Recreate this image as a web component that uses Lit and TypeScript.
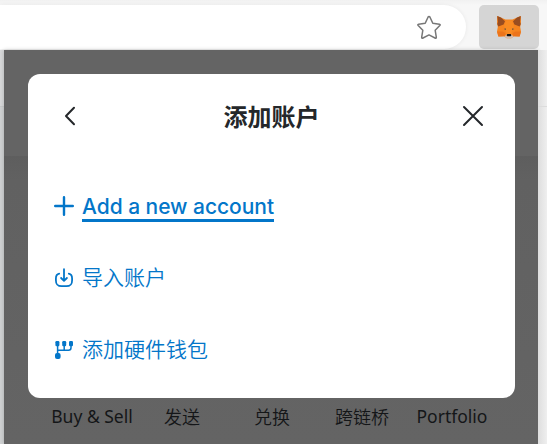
import { LitElement, html, css, svg } from "lit";
import { customElement } from "lit/decorators.js";

const icons = {
  star: svg`<svg width="26" height="26" viewBox="0 0 26 26" fill="none" stroke="#777" stroke-width="1.5" stroke-linejoin="round"><path d="M13 1.8Q13.5 1.2 14 2.2L16.8 8.2L23.4 9.2Q24.8 9.5 23.8 10.6L19.2 15.3L20.3 22.2Q20.4 23.7 19 23L13 19.9L7 23Q5.6 23.7 5.7 22.2L6.8 15.3L2.2 10.6Q1.2 9.5 2.6 9.2L9.2 8.2L12 2.2Q12.5 1.2 13 1.8Z"/></svg>`,
  fox: svg`<svg width="26" height="24" viewBox="0 0 26 24"><path fill="#f5841f" d="M1.2 1L9.5 4.6H16.5L24.8 1L25 7.5L24.2 12L25 16.5L23.6 21.4L18 21.2L15.2 23.3H10.8L8 21.2L2.4 21.4L1 16.5L1.8 12L1 7.5Z"/><path fill="#994d20" d="M1.2 1L5 2.4L9 6.2L7.6 9.4L2.4 11.6L1.2 9L2 7ZM24.8 1L21 2.4L17 6.2L18.4 9.4L23.6 11.6L24.8 9L24 7Z"/><path fill="#ec741b" d="M1 16.6H6.5L9.4 18L8.6 21.2L2.4 21.4ZM25 16.6H19.5L16.6 18L17.4 21.2L23.6 21.4Z"/><path fill="#f98b22" d="M8.2 10.8L10.3 5.2H15.7L17.8 10.8L15.3 19H10.7Z"/><path fill="#60513f" d="M7.8 14L9.7 13.3L10 15ZM18.2 14L16.3 13.3L16 15Z"/><path fill="#d5bfb2" d="M8.6 21.2L10.8 19.6H15.2L17.4 21.2L15.2 23.3H10.8Z"/><path fill="#171615" d="M11.2 19H14.8L15.4 20.6L14.6 21.2H11.4L10.6 20.6Z"/></svg>`,
  back: svg`<svg width="14" height="20" viewBox="0 0 14 20" fill="none" stroke="#24272a" stroke-width="2" stroke-linecap="round" stroke-linejoin="round"><path d="M11 1.8L3 10L11 18.2"/></svg>`,
  close: svg`<svg width="22" height="22" viewBox="0 0 22 22" fill="none" stroke="#24272a" stroke-width="2" stroke-linecap="round"><path d="M2 2L20 20M20 2L2 20"/></svg>`,
  plus: svg`<svg width="20" height="20" viewBox="0 0 20 20" fill="none" stroke="#0376c9" stroke-width="2.4" stroke-linecap="round"><path d="M10 1.2V18.8M1.2 10H18.8"/></svg>`,
  load: svg`<svg width="20" height="20" viewBox="0 0 20 20" fill="none" stroke="#0376c9" stroke-width="1.8" stroke-linecap="round" stroke-linejoin="round"><path d="M5.2 5.6C2.7 6.1 1.9 7.6 1.9 10.5V12.3C1.9 16.7 3.4 18.2 7.7 18.2H12.3C16.6 18.2 18.1 16.7 18.1 12.3V10.5C18.1 7.6 17.3 6.1 14.8 5.6M10 1.2V12.4M7.1 10L10 12.9L12.9 10"/></svg>`,
  hardware: svg`<svg width="20" height="20" viewBox="0 0 20 20"><g fill="#0376c9"><rect x="1.4" y="1" width="4" height="5.2" rx="1.2"/><rect x="8.2" y="1" width="4" height="5.2" rx="1.2"/><rect x="15" y="1" width="4" height="5.2" rx="1.2"/><rect x="1" y="13" width="5.6" height="6" rx="2"/></g><path d="M3.6 14V5M3.6 10.2H14.5Q17 10.2 17 7.7V5M10.2 5V10" fill="none" stroke="#0376c9" stroke-width="1.5"/></svg>`,
};

@customElement("app-root")
export class AppRoot extends LitElement {
  static styles = css`
    :host { display: block; width: 547px; height: 444px; overflow: hidden; font-family: "Noto Sans", "Noto Sans CJK SC", sans-serif; }
    * { box-sizing: border-box; }
    svg { display: block; flex: none; }
    .window { height: 444px; display: flex; flex-direction: column; background: linear-gradient(#f1f1f1, #f7f7f7 5px, #f7f7f7 50px, #ededed 106px); }
    .toolbar { height: 50px; flex: none; display: flex; align-items: flex-start; padding-top: 5px; }
    .address { width: 466px; height: 44px; background: #fff; border-radius: 0 22px 22px 0; display: flex; justify-content: flex-end; padding: 10px 24px 0 0; box-shadow: 0 0 4px #0001; }
    .extension { width: 60px; height: 44px; margin-left: 13px; border-radius: 5px; background: #d5d5d5; display: flex; justify-content: center; padding-top: 10px; }
    .body { flex: 1; display: grid; grid-template-columns: 4px 534px 9px; }
    .left { background: linear-gradient(#d7d8d9 56px, #c8cacb 56px, #c8cacb 57px, #cfd1d2 57px); }
    .right { background: linear-gradient(transparent 56px, #dcdcdc 56px, #dcdcdc 57px, transparent 57px), linear-gradient(90deg, #dedede, #efefef); }
    .popup { background: linear-gradient(#646464 0, #646464 106px, #5e5e5e 106px, #616161 130px, #646464); box-shadow: 0 0 4px #0003; padding: 24px 23px 0 24px; }
    .dialog { width: 487px; height: 324px; background: #fff; border-radius: 12px; }
    .header { height: 84px; display: grid; grid-template-columns: 84px 1fr 84px; align-items: center; justify-items: center; }
    .title { font: 700 24px/34px "Noto Sans CJK SC", sans-serif; color: #24272a; margin-top: -1px; }
    .actions { padding: 12px 0 0 26px; }
    .action { height: 72px; display: flex; align-items: center; gap: 8px; color: #0376c9; font: 350 21px/30px "Noto Sans CJK SC", sans-serif; }
    .label { padding-bottom: 5px; }
    .new { font: 500 21px/27px Inter, sans-serif; letter-spacing: -.04px; border-bottom: 3px solid #0376c9; width: 192px; height: 30px; padding-top: 1px; margin-top: 1px; white-space: nowrap; }
    .shortcuts { height: 36px; display: grid; grid-template-columns: repeat(5, 90px); justify-content: center; text-align: center; font-size: 17.5px; line-height: 37px; color: #141618; white-space: nowrap; margin-left: 1px; }
    .zh { font: 350 18px/36px "Noto Sans CJK SC", sans-serif; }
  `;

  render() {
    return html`<div class="window">
      <div class="toolbar"><div class="address">${icons.star}</div><div class="extension">${icons.fox}</div></div>
      <div class="body"><div class="left"></div>
        <main class="popup">
          <section class="dialog">
            <header class="header">${icons.back}<span class="title">添加账户</span>${icons.close}</header>
            <div class="actions">
              <div class="action">${icons.plus}<span class="new">Add a new account</span></div>
              <div class="action">${icons.load}<span class="label">导入账户</span></div>
              <div class="action">${icons.hardware}<span class="label">添加硬件钱包</span></div>
            </div>
          </section>
          <nav class="shortcuts"><span>Buy &amp; Sell</span><span class="zh">发送</span><span class="zh">兑换</span><span class="zh">跨链桥</span><span>Portfolio</span></nav>
        </main>
        <div class="right"></div>
      </div>
    </div>`;
  }
}
